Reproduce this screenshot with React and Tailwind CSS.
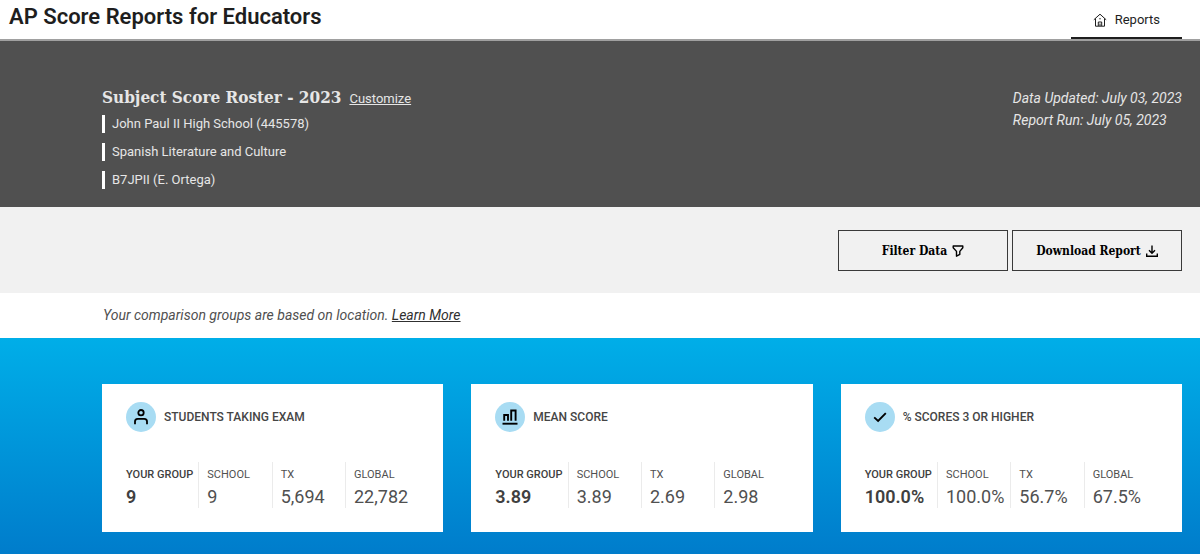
import React from 'react';

const cards = [
  {
    title: 'Students Taking Exam',
    icon: PersonIcon,
    stats: [
      { label: 'Your Group', value: '9' },
      { label: 'School', value: '9' },
      { label: 'TX', value: '5,694' },
      { label: 'Global', value: '22,782' },
    ],
  },
  {
    title: 'Mean Score',
    icon: ChartIcon,
    stats: [
      { label: 'Your Group', value: '3.89' },
      { label: 'School', value: '3.89' },
      { label: 'TX', value: '2.69' },
      { label: 'Global', value: '2.98' },
    ],
  },
  {
    title: '% Scores 3 or Higher',
    icon: CheckIcon,
    stats: [
      { label: 'Your Group', value: '100.0%' },
      { label: 'School', value: '100.0%' },
      { label: 'TX', value: '56.7%' },
      { label: 'Global', value: '67.5%' },
    ],
  },
];

const details = ['John Paul II High School (445578)', 'Spanish Literature and Culture', 'B7JPII (E. Ortega)'];

function HomeIcon() {
  return (
    <svg className="w-[14px] h-[14px]" viewBox="0 0 14 14" fill="none" stroke="currentColor" strokeWidth="1" aria-hidden="true">
      <path d="M0.8 6.8 L7 1.2 L13.2 6.8" />
      <path d="M2.5 5.5 V13.2 H11.5 V5.5" />
      <path d="M5.3 13 V9 H8.7 V13" />
      <path d="M7 10.5 V13" />
      <circle cx="7" cy="5.7" r="0.7" fill="currentColor" stroke="none" />
    </svg>
  );
}

function FilterIcon() {
  return (
    <svg className="w-3 h-3" viewBox="0 0 12 12" fill="none" stroke="currentColor" strokeWidth="1.4" strokeLinejoin="round" aria-hidden="true">
      <path d="M1.2 1 H10.8 V2.8 L7.8 6.4 V9.4 L4.5 11.2 V6.4 L1.2 2.8 Z" />
    </svg>
  );
}

function DownloadIcon() {
  return (
    <svg className="w-3 h-3" viewBox="0 0 12 12" fill="none" stroke="currentColor" strokeWidth="1.4" aria-hidden="true">
      <path d="M6 0.5 V8 M3 5.2 L6 8.2 L9 5.2" />
      <path d="M0.7 8.4 V11.2 H11.3 V8.4" />
    </svg>
  );
}

function PersonIcon() {
  return (
    <svg className="w-4 h-4" viewBox="0 0 16 16" fill="none" stroke="currentColor" strokeWidth="1.8" aria-hidden="true">
      <circle cx="8" cy="3.7" r="2.7" />
      <path d="M2 15.3 V12.6 Q2 9.9 4.7 9.9 H11.3 Q14 9.9 14 12.6 V15.3" />
    </svg>
  );
}

function ChartIcon() {
  return (
    <svg className="w-4 h-4" viewBox="0 0 16 16" fill="none" stroke="currentColor" strokeWidth="1.9" aria-hidden="true">
      <path d="M2.2 11.8 V6 H6 V11.8" />
      <path d="M9.2 11.8 V1.5 H13.6 V11.8" />
      <path d="M0.5 14.7 H15.5" />
    </svg>
  );
}

function CheckIcon() {
  return (
    <svg className="w-4 h-4" viewBox="0 0 16 16" fill="none" stroke="currentColor" strokeWidth="1.9" aria-hidden="true">
      <path d="M2.2 8.4 L6.1 12 L13.8 4.2" />
    </svg>
  );
}

function ScoreCard({ title, icon: Icon, stats }) {
  return (
    <section className="bg-white p-6 pt-[18px]">
      <div className="flex items-center gap-2">
        <span className="flex w-[30px] h-[30px] items-center justify-center rounded-full bg-[#a8dcf3] text-black">
          <Icon />
        </span>
        <h2 className="text-[12px] leading-5 font-medium uppercase text-[#454545]">{title}</h2>
      </div>
      <dl className="mt-[30px] grid grid-cols-4 text-[#505050]">
        {stats.map((stat, i) => (
          <div
            key={stat.label}
            className={`whitespace-nowrap border-[#ebebeb] ${i === 0 ? 'font-medium text-[#404040]' : 'pl-2'} ${i < 3 ? 'border-r' : ''}`}
          >
            <dt className="pt-[2px] text-[11px] leading-[22px] uppercase">{stat.label}</dt>
            <dd className={`font-['Roboto_Slab','Roboto',serif] text-[18px] leading-[22px] ${i === 0 ? 'font-semibold' : ''}`}>{stat.value}</dd>
          </div>
        ))}
      </dl>
    </section>
  );
}

const App = () => {
  return (
    <main className="font-['Roboto',sans-serif] text-[#1e1e1e]">
      {/* Top bar */}
      <header className="flex items-stretch justify-between border-b-2 border-[#a0a0a0] pl-[9px] pr-[18px]">
        <h1 className="text-[22px] leading-[34px] font-semibold">AP Score Reports for Educators</h1>
        <nav className="flex">
          <a href="#reports" className="flex items-center gap-2 border-b-2 border-[#1e1e1e] px-[22px] pt-[7px] pb-[5px] text-[13px] leading-[25px]">
            <HomeIcon />
            Reports
          </a>
        </nav>
      </header>

      {/* Report heading */}
      <div className="flex items-start justify-between bg-[#505050] pt-[42px] pb-[18px] pl-[102px] pr-[18px] text-[#e6e6e6]">
        <div>
          <div className="flex items-baseline gap-2">
            <h2 className="font-['Roboto_Slab','DejaVu_Serif_Condensed','DejaVu_Serif',serif] text-[17px] leading-7 font-semibold">Subject Score Roster - 2023</h2>
            <a href="#customize" className="text-[13px] underline">Customize</a>
          </div>
          <ul className="mt-1 space-y-[10px]">
            {details.map((line) => (
              <li key={line} className="border-l-3 border-white pl-[7px] text-[13px] leading-[18px]">
                {line}
              </li>
            ))}
          </ul>
        </div>
        <div className="pt-1 text-[14px] leading-[22px] italic">
          <p>Data Updated: July 03, 2023</p>
          <p>Report Run: July 05, 2023</p>
        </div>
      </div>

      {/* Actions */}
      <div className="flex justify-end gap-1 bg-[#f1f1f1] pt-[23px] pb-[22px] pr-[18px] font-['Roboto_Slab','DejaVu_Serif_Condensed','DejaVu_Serif',serif] text-[12px] font-semibold text-black">
        <button type="button" className="flex w-[170px] h-[41px] items-center justify-center gap-[5px] border border-[#3a3a3a]">
          Filter Data
          <FilterIcon />
        </button>
        <button type="button" className="flex w-[170px] h-[41px] items-center justify-center gap-[5px] border border-[#3a3a3a]">
          Download Report
          <DownloadIcon />
        </button>
      </div>

      <p className="bg-white py-3 pl-[103px] text-[14px] leading-[21px] italic text-[#505050]">
        Your comparison groups are based on location.{' '}
        <a href="#learn-more" className="text-[#303030] underline">Learn More</a>
      </p>

      {/* Score summary */}
      <div className="grid grid-cols-3 gap-7 bg-linear-to-b from-[#00aee8] to-[#0077c8] pt-[46px] pb-[46px] pl-[102px] pr-[18px]">
        {cards.map((card) => (
          <ScoreCard key={card.title} {...card} />
        ))}
      </div>
    </main>
  );
};

export default App;
